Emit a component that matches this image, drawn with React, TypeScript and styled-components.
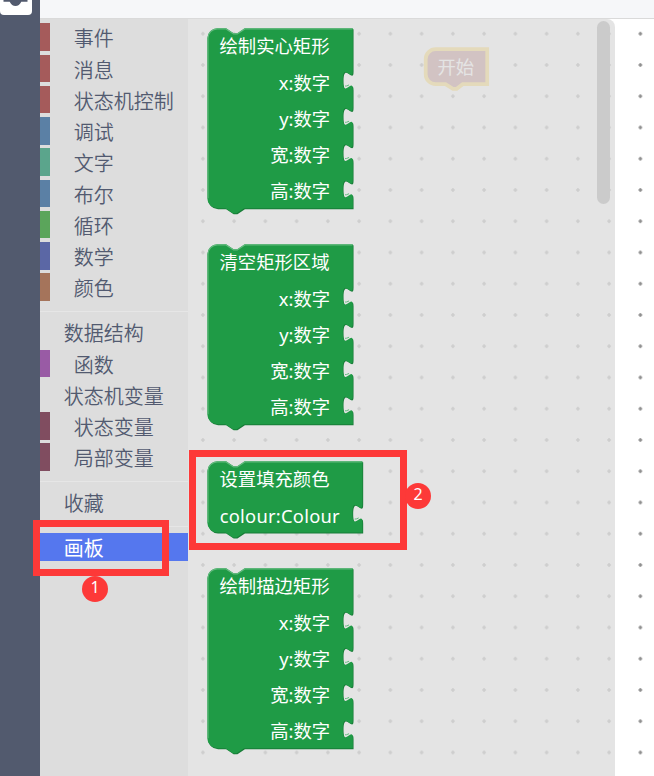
import React from 'react';
import styled, { createGlobalStyle } from 'styled-components';

const GlobalStyle = createGlobalStyle`
  html, body { margin: 0; padding: 0; overflow: hidden; }
  * { box-sizing: border-box; }
`;

const uiFont = `'Noto Sans', 'Noto Sans CJK SC', sans-serif`;

const Shell = styled.div`
  position: relative;
  display: grid;
  grid-template-columns: 40px 1fr;
  width: 654px;
  height: 776px;
  overflow: hidden;
  background: #fff;
  font-family: ${uiFont};
`;

const Rail = styled.nav`
  background: #525a6e;
`;

const RailButton = styled.div`
  width: 31.5px;
  height: 15px;
  background: #fff;
  border-radius: 0 0 4px 4px;
  svg { display: block; }
`;

const Main = styled.div`
  display: grid;
  grid-template-rows: 19px 1fr;
  min-width: 0;
`;

const TopBar = styled.header`
  background: #f6f7f9;
  border-bottom: 1px solid #dadada;
`;

const Editor = styled.div`
  position: relative;
  display: grid;
  grid-template-columns: 148px 427px 1fr;
  min-height: 0;
`;

const Workspace = styled.div`
  position: absolute;
  inset: 0;
  svg { display: block; }
`;

const Toolbox = styled.aside`
  position: relative;
  display: flex;
  flex-direction: column;
  background: #ddd;
  padding-top: 4.4px;
`;

const Category = styled.div<{ $color?: string; $nested?: boolean; $active?: boolean }>`
  flex: none;
  height: 27.5px;
  margin-bottom: 3.75px;
  padding-left: ${(p) => (p.$nested ? 23.75 : 13.75)}px;
  border-left: 10px solid ${(p) => p.$color ?? 'transparent'};
  background: ${(p) => (p.$active ? '#5577ee' : 'transparent')};
  color: ${(p) => (p.$active ? '#fff' : '#525a70')};
  font-size: 20px;
  font-weight: ${(p) => (p.$active ? 400 : 350)};
  line-height: 32px;
  white-space: nowrap;
`;

const Separator = styled.div`
  flex: none;
  height: 1px;
  margin: 6.25px 0 6.5px;
  background: #e6e6e6;
`;

const Flyout = styled.section`
  position: relative;
  display: flex;
  justify-content: space-between;
  padding: 9px 5px 0 19px;
  background: rgba(221, 221, 221, 0.8);
  border-radius: 0 8px 0 0;
`;

const BlockList = styled.div`
  display: flex;
  flex-direction: column;
  svg { display: block; flex: none; overflow: visible; }
`;

const BlockSlot = styled.div<{ $rows: number }>`
  flex: none;
  height: ${(p) => p.$rows * 36.25 + 35}px;
`;

const ScrollThumb = styled.div`
  width: 13px;
  height: 182.5px;
  margin-top: -7px;
  border-radius: 7px;
  background: #cbcbcb;
`;

const Highlight = styled.div<{ $x: number; $y: number; $w: number; $h: number }>`
  position: absolute;
  left: ${(p) => p.$x}px;
  top: ${(p) => p.$y}px;
  width: ${(p) => p.$w}px;
  height: ${(p) => p.$h}px;
  border: 7px solid #fd3938;
`;

const Marker = styled.div<{ $x: number; $y: number }>`
  position: absolute;
  left: ${(p) => p.$x}px;
  top: ${(p) => p.$y}px;
  width: 26px;
  height: 26px;
  border-radius: 50%;
  background: #fd3938;
  color: #fff;
  font-size: 16px;
  line-height: 23px;
  text-align: center;
`;

type Field = { label: string; length?: number };
type BlockProps = { title: string; fields: Field[]; width: number };

const ROW = 29;

/** A statement block: title row followed by one value input per field. */
function Block({ title, fields, width }: BlockProps) {
  const h = ROW * (fields.length + 1) - 1;
  const tabs = fields
    .map((_, i) => `v 5 c 0,10 -8,-8 -8,7.5 s 8,-2.5 8,7.5 v ${i === fields.length - 1 ? 8 : 9}`)
    .join(' ');
  const path =
    `m 0,8 A 8,8 0 0,1 8,0 H 15 l 6,4 3,0 6,-4 H ${width} v ${ROW} ${tabs} ` +
    `H 29.5 l -6,4 -3,0 -6,-4 H 8 a 8,8 0 0,1 -8,-8 z`;
  const light =
    `m 0.5,${h - 8} V 8 A 7.5,7.5 0 0,1 8,0.5 H 15 l 6,4 3,0 6,-4 H ${width - 0.5}`;
  const textRight = (width - 19) * 1.25 + 1;
  return (
    <svg width={width * 1.25 + 2} height={(h + 6) * 1.25}>
      <g transform="translate(0.3 0.3)">
        <g transform="scale(1.25)">
          <path d={path} transform="translate(0.6,0.7)" fill="#197c38" />
          <path d={path} fill="#1f9b46" />
          <path d={light} fill="none" stroke="#62b97d" strokeWidth="1" />
          {fields.map((f, i) => (
            <path
              key={f.label}
              d={`M ${width - 6.2},${ROW * (i + 1) + 17.2} q 1,0.3 3.2,-0.9`}
              fill="none"
              stroke="#62b97d"
              strokeWidth="0.8"
            />
          ))}
        </g>
        <g fill="#fff" fontFamily={uiFont} fontSize="18.33">
          <text x="12.2" y="25">{title}</text>
          {fields.map((f, i) => (
            <text
              key={f.label}
              x={textRight}
              y={25.1 + (i + 1) * 36.25}
              textAnchor="end"
              textLength={f.length}
            >
              {f.label}
            </text>
          ))}
        </g>
      </g>
    </svg>
  );
}

function StartBlock() {
  return (
    <g transform="translate(385.7 30.2)">
      <path
        d="M 0,10 A 10,10 0 0,1 10,0 H 61.5 V 35 H 37 l -6,4.6 h -3.75 l -7.5,-4.6 H 10 A 10,10 0 0,1 0,25 Z"
        fill="#a55b5b"
        stroke="#fc3"
        strokeWidth="3.75"
      />
      <text x="11.8" y="25.3" fill="#fff" fontFamily={uiFont} fontSize="18.33">开始</text>
    </g>
  );
}

const basics = [
  ['事件', '#a55b5b'],
  ['消息', '#a55b5b'],
  ['状态机控制', '#a55b5b'],
  ['调试', '#5b80a5'],
  ['文字', '#5ba58c'],
  ['布尔', '#5b80a5'],
  ['循环', '#5ba55b'],
  ['数学', '#5b67a5'],
  ['颜色', '#a5745b'],
];

const rectFields: Field[] = [
  { label: 'x:数字' },
  { label: 'y:数字' },
  { label: '宽:数字' },
  { label: '高:数字' },
];

const blocks: BlockProps[] = [
  { title: '绘制实心矩形', fields: rectFields, width: 116.4 },
  { title: '清空矩形区域', fields: rectFields, width: 116.4 },
  { title: '设置填充颜色', fields: [{ label: 'colour:Colour', length: 120 }], width: 124.1 },
  { title: '绘制描边矩形', fields: rectFields, width: 116.4 },
];

export default function App() {
  return (
    <>
      <GlobalStyle />
      <Shell>
        <Rail>
          <RailButton>
            <svg width="32" height="15">
              <path d="M3.5 0H27.5V1.7H21.3C20 4.5 18 6 15.5 6S11 4.5 9.7 1.7H3.5Z" fill="#525a6e" />
            </svg>
          </RailButton>
        </Rail>
        <Main>
          <TopBar />
          <Editor>
            <Workspace>
              <svg width="614" height="757">
                <defs>
                  <pattern id="grid" x="-9" y="-0.9" width="31.25" height="31.25" patternUnits="userSpaceOnUse">
                    <path d="M13.75 15.625h3.75M15.625 13.75v3.75" stroke="#888" strokeWidth="1.5" />
                  </pattern>
                </defs>
                <rect width="614" height="757" fill="url(#grid)" />
                <StartBlock />
              </svg>
            </Workspace>
            <Toolbox>
              {basics.map(([name, color]) => (
                <Category key={name} $color={color} $nested>{name}</Category>
              ))}
              <Separator />
              <Category>数据结构</Category>
              <Category $color="#995ba5" $nested>函数</Category>
              <Category>状态机变量</Category>
              <Category $color="#804d60" $nested>状态变量</Category>
              <Category $color="#804d60" $nested>局部变量</Category>
              <Separator />
              <Category>收藏</Category>
              <Separator />
              <Category $active>画板</Category>
            </Toolbox>
            <Flyout>
              <BlockList>
                {blocks.map((b) => (
                  <BlockSlot key={b.title} $rows={b.fields.length + 1}>
                    <Block {...b} />
                  </BlockSlot>
                ))}
              </BlockList>
              <ScrollThumb />
            </Flyout>
          </Editor>
        </Main>
        <Highlight $x={33} $y={520} $w={136} $h={56} />
        <Marker $x={82} $y={576}>1</Marker>
        <Highlight $x={189} $y={450} $w={218} $h={100} />
        <Marker $x={405} $y={483}>2</Marker>
      </Shell>
    </>
  );
}
